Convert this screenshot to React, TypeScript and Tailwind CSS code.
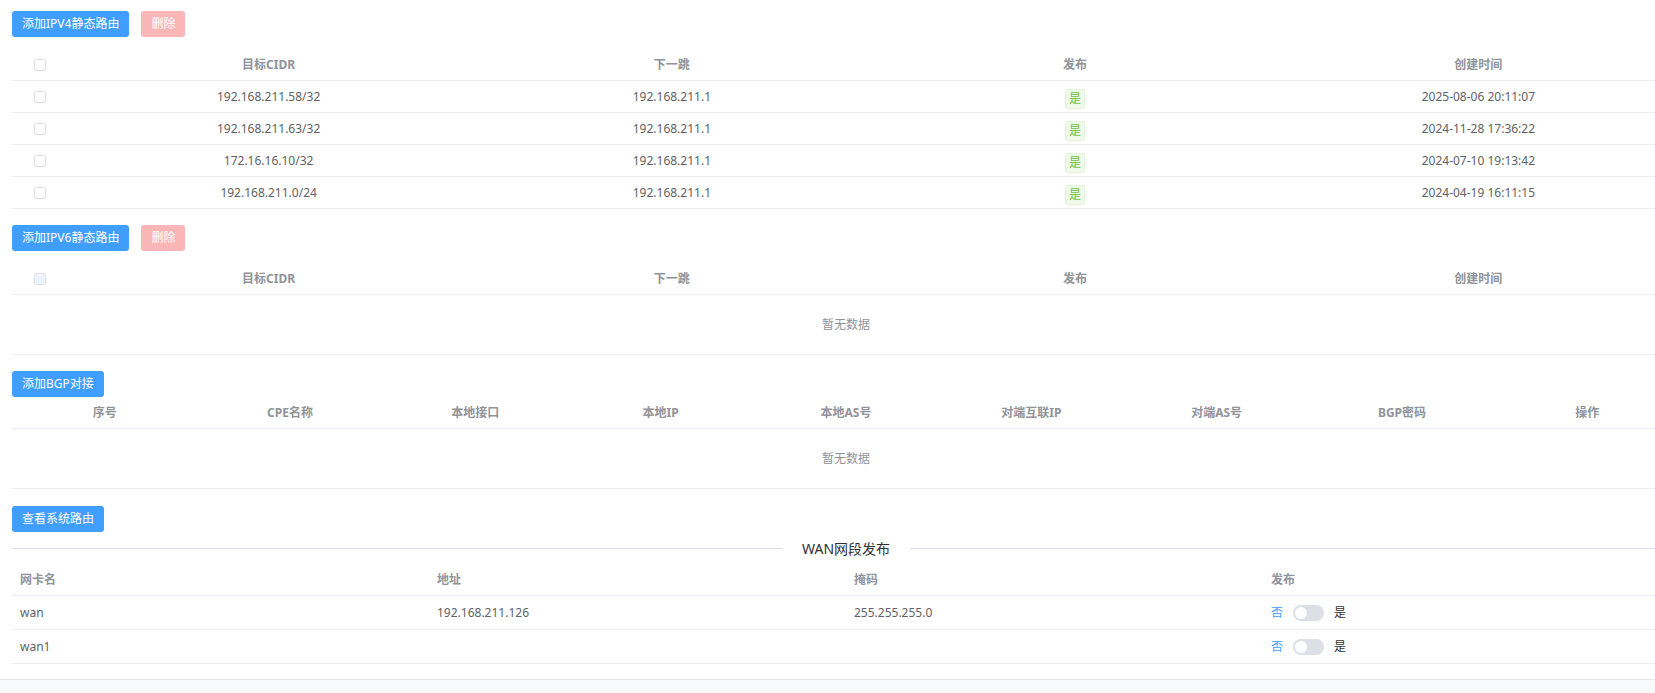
import React from "react";

const FONT = { fontFamily: '"Noto Sans", "Noto Sans CJK SC", sans-serif' };

function Btn({ children, danger }: { children: React.ReactNode; danger?: boolean }) {
  return (
    <button
      className={
        "h-[26px] px-[10px] rounded-[3px] text-[12px] leading-none text-white " +
        (danger ? "bg-[#fab6b6]" : "bg-[#409eff]")
      }
    >
      {children}
    </button>
  );
}

function Checkbox({ disabled }: { disabled?: boolean }) {
  return (
    <span
      className={
        "inline-block w-[12px] h-[12px] rounded-[2px] border border-[#dcdfe6] " +
        (disabled ? "bg-[#edf2fc]" : "bg-white")
      }
    />
  );
}

function Tag() {
  return (
    <span className="mt-[4px] inline-flex items-center justify-center w-[20px] h-[20px] rounded-[3px] border border-[#e1f3d8] bg-[#f0f9eb] text-[#67c23a] text-[12px] leading-none">
      是
    </span>
  );
}

const ipv4Rows = [
  ["192.168.211.58/32", "192.168.211.1", "2025-08-06 20:11:07"],
  ["192.168.211.63/32", "192.168.211.1", "2024-11-28 17:36:22"],
  ["172.16.16.10/32", "192.168.211.1", "2024-07-10 19:13:42"],
  ["192.168.211.0/24", "192.168.211.1", "2024-04-19 16:11:15"],
];

const routeHeaders = ["目标CIDR", "下一跳", "发布", "创建时间"];
const bgpHeaders = ["序号", "CPE名称", "本地接口", "本地IP", "本地AS号", "对端互联IP", "对端AS号", "BGP密码", "操作"];

function RouteHeader({ disabled }: { disabled?: boolean }) {
  return (
    <div className="grid grid-cols-[55px_1fr_1fr_1fr_1fr] h-[32px] border-b border-[#ebeef5] text-[12px] font-bold text-[#909399]">
      <div className="flex items-center justify-center">
        <Checkbox disabled={disabled} />
      </div>
      {routeHeaders.map((h) => (
        <div key={h} className="flex items-center justify-center">
          {h}
        </div>
      ))}
    </div>
  );
}

function Empty() {
  return (
    <div className="h-[60px] border-b border-[#ebeef5] flex items-center justify-center text-[12px] text-[#909399]">
      暂无数据
    </div>
  );
}

function Switch() {
  return (
    <span className="inline-flex items-center w-[31px] h-[16px] rounded-full bg-[#dcdfe6] px-[2px]">
      <span className="w-[12px] h-[12px] rounded-full bg-white" />
    </span>
  );
}

const wanRows = [
  ["wan", "192.168.211.126", "255.255.255.0"],
  ["wan1", "", ""],
];

export default function App() {
  return (
    <div className="w-[1655px] h-[693px] overflow-hidden bg-white" style={FONT}>
      <div className="w-[1668px] ml-[12px] pt-[11px]">
        {/* IPV4 */}
        <div className="flex gap-[12px]">
          <Btn>添加IPV4静态路由</Btn>
          <Btn danger>删除</Btn>
        </div>
        <div className="mt-[12px]">
          <RouteHeader />
          {ipv4Rows.map((r) => (
            <div
              key={r[0]}
              className="grid grid-cols-[55px_1fr_1fr_1fr_1fr] h-[32px] border-b border-[#ebeef5] text-[12px] text-[#606266]"
            >
              <div className="flex items-center justify-center">
                <Checkbox />
              </div>
              <div className="flex items-center justify-center">{r[0]}</div>
              <div className="flex items-center justify-center">{r[1]}</div>
              <div className="flex items-center justify-center">
                <Tag />
              </div>
              <div className="flex items-center justify-center">{r[2]}</div>
            </div>
          ))}
        </div>

        {/* IPV6 */}
        <div className="mt-[16px] flex gap-[12px]">
          <Btn>添加IPV6静态路由</Btn>
          <Btn danger>删除</Btn>
        </div>
        <div className="mt-[12px]">
          <RouteHeader disabled />
          <Empty />
        </div>

        {/* BGP */}
        <div className="mt-[16px] flex">
          <Btn>添加BGP对接</Btn>
        </div>
        <div>
          <div className="grid grid-cols-9 h-[32px] border-b border-[#ebeef5] text-[12px] font-bold text-[#909399]">
            {bgpHeaders.map((h) => (
              <div key={h} className="flex items-center justify-center">
                {h}
              </div>
            ))}
          </div>
          <Empty />
        </div>

        {/* System route */}
        <div className="mt-[17px] flex">
          <Btn>查看系统路由</Btn>
        </div>

        {/* Divider */}
        <div className="flex items-center h-px mt-[16px] mb-[15px]">
          <div className="flex-1 h-px bg-[#dcdfe6]" />
          <span className="px-[20px] text-[14px] leading-none text-[#303133] whitespace-nowrap">WAN网段发布</span>
          <div className="flex-1 h-px bg-[#dcdfe6]" />
        </div>

        {/* WAN table */}
        <div>
          <div className="grid grid-cols-4 h-[32px] border-b border-[#ebeef5] text-[12px] font-bold text-[#909399]">
            {["网卡名", "地址", "掩码", "发布"].map((h) => (
              <div key={h} className="flex items-center pl-[8px]">
                {h}
              </div>
            ))}
          </div>
          {wanRows.map((r) => (
            <div
              key={r[0]}
              className="grid grid-cols-4 h-[34px] border-b border-[#ebeef5] text-[12px] text-[#606266]"
            >
              <div className="flex items-center pl-[8px]">{r[0]}</div>
              <div className="flex items-center pl-[8px]">{r[1]}</div>
              <div className="flex items-center pl-[8px]">{r[2]}</div>
              <div className="flex items-center pl-[8px] gap-[10px]">
                <span className="text-[#409eff]">否</span>
                <Switch />
                <span className="text-[#303133]">是</span>
              </div>
            </div>
          ))}
        </div>
      </div>
      <div className="mt-[15px] h-[20px] border-t border-[#e4e7ed] bg-[#f8f9fb]" />
    </div>
  );
}
